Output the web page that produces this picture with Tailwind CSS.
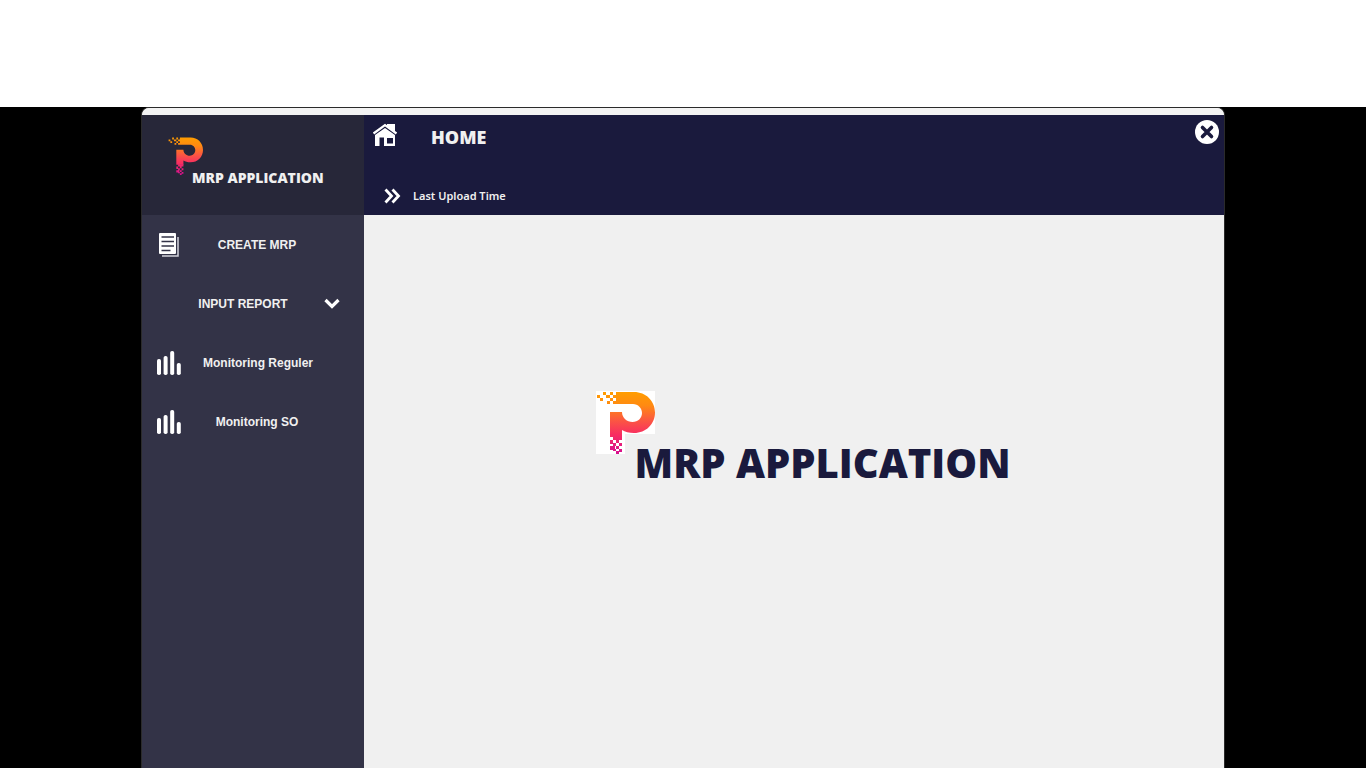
<!DOCTYPE html>
<html lang="en">
<head>
<meta charset="utf-8">
<meta name="viewport" content="width=device-width, initial-scale=1">
<title>MRP Application</title>
<script src="https://cdn.jsdelivr.net/npm/@tailwindcss/browser@4"></script>
</head>
<body class="flex h-screen flex-col overflow-hidden bg-black font-['Open_Sans',sans-serif]">
<svg class="absolute size-0" aria-hidden="true">
  <defs>
    <linearGradient id="flame" gradientUnits="userSpaceOnUse" x1="0" y1="1" x2="0" y2="62">
      <stop offset="0" stop-color="#ff9d00"/><stop offset=".22" stop-color="#ff8a12"/><stop offset=".48" stop-color="#fb5444"/><stop offset=".7" stop-color="#f82c62"/><stop offset="1" stop-color="#d8108f"/>
    </linearGradient>
    <symbol id="logo" viewBox="0 0 59 63" preserveAspectRatio="none">
      <g fill="url(#flame)">
        <path d="M20 1H38C50 1 59 10 59 21.500S50 42 38 42C33 42 29 41 26 39V46H14V21H26C26 27 31 31 36.500 31C42 31 46 27 46 22S42 13 37 13H17V10H20V7H17V4H20Z"/>
        <path d="M7 1h3v3h-3zM14 1h3v3h-3zM1 4h3v3h-3zM10 4h4v3h-4zM4 7h3v3h-3zM14 7h3v3h-3zM11 10h3v3h-3z"/>
        <path d="M17 45h9v4h-9zM14 49h3v4h-3zM20 49h3v3h-3zM17 52h3v3h-3zM23 52h3v3h-3zM14 55h5v4h-5zM20 55h3v3h-3zM17 58h3v2h-3zM23 58h3v3h-3zM20 60h3v3h-3z"/>
      </g>
    </symbol>
    <symbol id="bars" viewBox="0 0 24 24">
      <g fill="#fff"><rect x="0" y="8" width="4" height="16" rx="1.800"/><rect x="6.600" y="5" width="4" height="19" rx="1.800"/><rect x="13.200" y="0" width="4" height="24" rx="1.800"/><rect x="19.800" y="12" width="4" height="12" rx="1.800"/></g>
    </symbol>
  </defs>
</svg>
<div class="h-[107px] shrink-0 bg-white"></div>
<div class="mx-auto flex min-h-0 w-[calc(100%-282px)] flex-1 flex-col overflow-hidden rounded-t-lg border border-b-0 border-[#2b2b2b] bg-[#f0f0f0]">
  <div class="h-[7px] shrink-0 bg-[#f3f3f3]"></div>
  <div class="flex min-h-0 flex-1">
    <aside class="flex w-[222px] shrink-0 flex-col bg-[#333347]">
      <div class="flex h-[100px] bg-[#272739] pt-[22px] pl-[26px]">
        <svg class="h-[38px] w-[35px] shrink-0" aria-hidden="true"><use href="#logo"/></svg>
        <div class="-ml-[11px] pt-[31px] text-sm leading-5 font-extrabold whitespace-nowrap text-[#f0f0f0]">MRP APPLICATION</div>
      </div>
      <nav class="flex flex-col font-['Liberation_Sans',sans-serif] text-xs font-bold text-[#f0f0f0]">
        <button class="grid h-[59px] grid-cols-[54px_122px_46px] items-center">
          <svg class="h-6 w-5 justify-self-center" viewBox="0 0 20 24" aria-hidden="true"><path d="M19 4V23H3" fill="none" stroke="#d4d4dc" stroke-width="1.500"/><rect width="17" height="21" rx="1" fill="#fff"/><path d="M2.500 4H15M2.500 8.500H15M2.500 13H15M2.500 17.500H11.500" stroke="#333347" stroke-width="1.500"/></svg>
          <span>CREATE MRP</span>
        </button>
        <button class="grid h-[59px] grid-cols-[26px_150px_28px] items-center">
          <span class="col-start-2">INPUT REPORT</span>
          <svg class="h-[11px] w-4 justify-self-center" viewBox="0 0 16 11" aria-hidden="true"><path d="M1.500 2L8 8.500L14.500 2" fill="none" stroke="#fff" stroke-width="3.200"/></svg>
        </button>
        <button class="grid h-[59px] grid-cols-[54px_124px_44px] items-center"><svg class="size-6 justify-self-center" aria-hidden="true"><use href="#bars"/></svg><span>Monitoring Reguler</span></button>
        <button class="grid h-[59px] grid-cols-[54px_122px_46px] items-center"><svg class="size-6 justify-self-center" aria-hidden="true"><use href="#bars"/></svg><span>Monitoring SO</span></button>
      </nav>
    </aside>
    <div class="flex min-w-0 flex-1 flex-col">
      <header class="flex h-[100px] shrink-0 flex-col justify-between bg-[#1a1a3d] pt-1 pb-2 text-[#f0f0f0]">
        <div class="flex items-start pr-[5px] pl-2">
          <svg class="mt-1 h-[24px] w-[26px]" viewBox="0 0 26 24" aria-hidden="true"><path d="M15 1h8v9l-8-6z" fill="#fff"/><path d="M1.500 10.500L13 2L24.500 10.500" fill="none" stroke="#fff" stroke-width="2.200"/><path fill-rule="evenodd" d="M3 12L13 5L23 12V23H12V14.500H7.500V23H3ZM15 15V20.500H21V15Z" fill="#fff"/></svg>
          <h1 class="mt-1 ml-[33px] text-lg leading-7 font-extrabold">HOME</h1>
          <button class="mt-px ml-auto" aria-label="Close"><svg class="size-6" viewBox="0 0 24 24" aria-hidden="true"><circle cx="12" cy="12" r="12" fill="#fff"/><path d="M7.500 7.500L16.500 16.500M16.500 7.500L7.500 16.500" stroke="#1a1a3d" stroke-width="3.600" stroke-linecap="round"/></svg></button>
        </div>
        <div class="flex items-center pl-5">
          <svg class="h-[16px] w-[17px]" viewBox="0 0 17 16" aria-hidden="true"><path d="M1.500 1.500L7.500 8L1.500 14.500M8.500 1.500L14.500 8L8.500 14.500" fill="none" stroke="#fff" stroke-width="2.800"/></svg>
          <span class="ml-3 font-['Noto_Sans',sans-serif] text-[11px] leading-[22px] font-semibold">Last Upload Time</span>
        </div>
      </header>
      <main class="flex flex-1 justify-center bg-[#f0f0f0] pt-[176px]">
        <div class="mr-[-18px] flex items-start">
          <div class="relative h-[63px] w-[59px] shrink-0">
            <div class="h-[43px] bg-white"></div><div class="h-5 w-[29px] bg-white"></div>
            <svg class="absolute inset-0 size-full" aria-hidden="true"><use href="#logo"/></svg>
          </div>
          <div class="-ml-5 pt-[48px] text-[40px] leading-[48px] font-extrabold whitespace-nowrap text-[#1a1a3d]">MRP APPLICATION</div>
        </div>
      </main>
    </div>
  </div>
</div>
</body>
</html>
